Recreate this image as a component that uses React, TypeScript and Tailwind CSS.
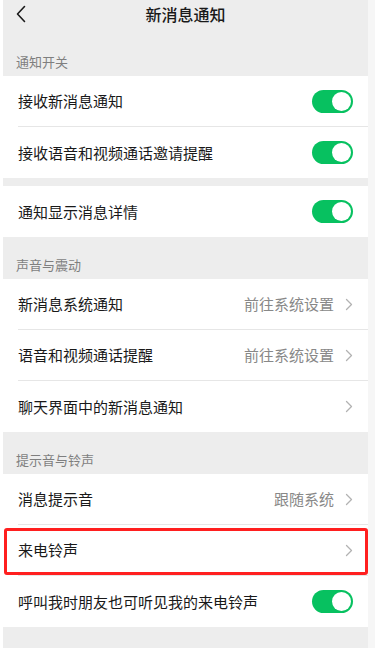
import type { ReactNode } from 'react';

const FONT = '[font-family:"Noto_Sans_CJK_SC","Noto_Sans",sans-serif]';

function Toggle() {
  return (
    <div className="flex h-[23px] w-[41px] items-center justify-end rounded-full bg-[#07c160] px-[2px]">
      <div className="h-[19px] w-[19px] rounded-full bg-white" />
    </div>
  );
}

function Chevron() {
  return (
    <svg width="8" height="13" viewBox="0 0 8 13" fill="none" aria-hidden="true">
      <path d="M1.5 1.5 L6.5 6.5 L1.5 11.5" stroke="#b2b2b2" strokeWidth="1.3" strokeLinecap="round" strokeLinejoin="round" />
    </svg>
  );
}

function SectionLabel({ children }: { children: ReactNode }) {
  return (
    <div className="flex h-[42px] items-end px-[13px] pb-[5px] text-[13px] leading-[18px] text-[#7f7f7f]">
      {children}
    </div>
  );
}

interface RowProps {
  label: string;
  value?: string;
  toggle?: boolean;
  divider?: boolean;
  highlight?: boolean;
}

function Row({ label, value, toggle, divider = true, highlight }: RowProps) {
  return (
    <div className="relative bg-white pl-[15px]">
      <div
        className={`flex h-[51px] items-center pr-[15px] ${divider ? 'border-b border-[#e6e6e6]' : ''}`}
      >
        <span className="flex-1 text-[15px] leading-[20px] text-[#191919]">{label}</span>
        {toggle ? (
          <Toggle />
        ) : (
          <div className="flex items-center gap-[11px]">
            {value && <span className="text-[15px] leading-[20px] text-[#888888]">{value}</span>}
            <Chevron />
          </div>
        )}
      </div>
      {highlight && (
        <div className="pointer-events-none absolute top-[3px] right-0 bottom-[1px] left-[1px] rounded-[3px] border-[3px] border-[#ff1f1f]" />
      )}
    </div>
  );
}

export default function App() {
  return (
    <div className={`flex h-[648px] w-[375px] overflow-hidden bg-white ${FONT}`}>
      <div className="w-[3px] shrink-0 bg-white" />

      <div className="flex-1 bg-[#ededed]">
        {/* Header */}
        <div className="relative flex h-[34px] items-center justify-center pb-[6px]">
          <svg
            className="absolute top-[5px] left-[12px]"
            width="12"
            height="18"
            viewBox="0 0 12 18"
            fill="none"
            aria-hidden="true"
          >
            <path d="M9.5 1.5 L2.5 9 L9.5 16.5" stroke="#1a1a1a" strokeWidth="1.6" strokeLinecap="round" strokeLinejoin="round" />
          </svg>
          <span className="text-[16px] leading-[20px] font-medium text-[#191919]">新消息通知</span>
        </div>

        <SectionLabel>通知开关</SectionLabel>
        <Row label="接收新消息通知" toggle />
        <Row label="接收语音和视频通话邀请提醒" toggle divider={false} />

        <div className="h-[8px]" />
        <Row label="通知显示消息详情" toggle divider={false} />

        <SectionLabel>声音与震动</SectionLabel>
        <Row label="新消息系统通知" value="前往系统设置" />
        <Row label="语音和视频通话提醒" value="前往系统设置" />
        <Row label="聊天界面中的新消息通知" divider={false} />

        <SectionLabel>提示音与铃声</SectionLabel>
        <Row label="消息提示音" value="跟随系统" />
        <Row label="来电铃声" highlight />
        <Row label="呼叫我时朋友也可听见我的来电铃声" toggle divider={false} />
      </div>

      <div className="w-[7px] shrink-0 bg-[#f6f6f6]" />
    </div>
  );
}
